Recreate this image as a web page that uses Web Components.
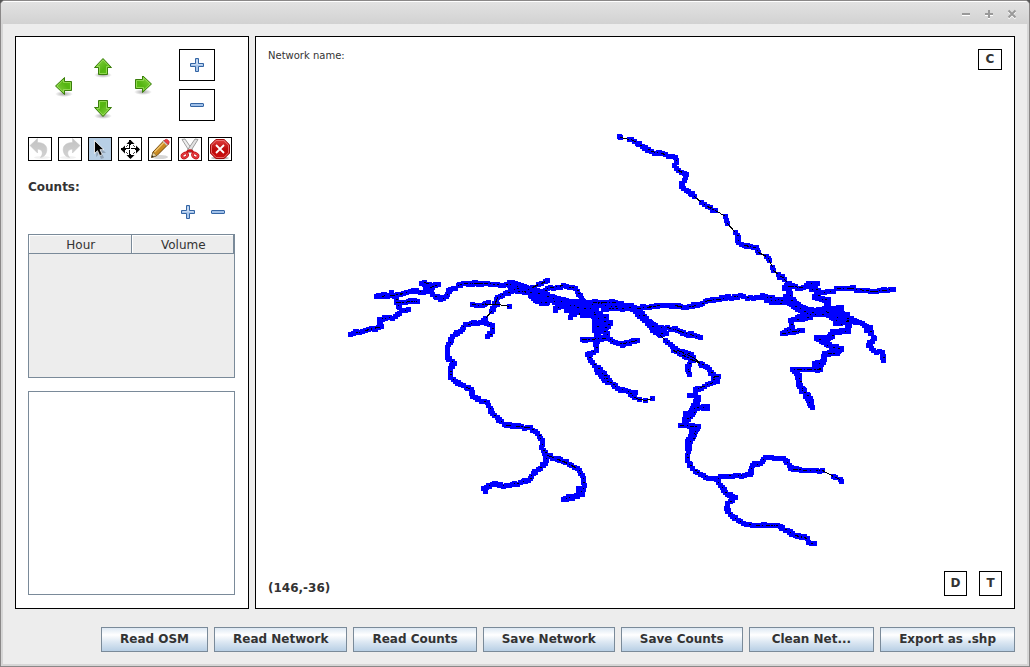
<!DOCTYPE html>
<html lang="en">
<head>
<meta charset="utf-8">
<title>Network editor</title>
<style>
  html, body { margin: 0; }
  body { font: 12px/15px "DejaVu Sans", sans-serif; color: #333; background: #555; }
</style>
</head>
<body>
<app-window>
  <tool-panel slot="main"></tool-panel>
  <network-map slot="main" position="(146,-36)"></network-map>
  <metal-button slot="actions">Read OSM</metal-button>
  <metal-button slot="actions">Read Network</metal-button>
  <metal-button slot="actions">Read Counts</metal-button>
  <metal-button slot="actions">Save Network</metal-button>
  <metal-button slot="actions">Save Counts</metal-button>
  <metal-button slot="actions" wide>Clean Net...</metal-button>
  <metal-button slot="actions">Export as .shp</metal-button>
</app-window>

<script>
const arrow = (turn, x, y) => `
  <defs>
    <linearGradient id="g" x1="0" y1="0" x2="1" y2="1"><stop offset="0" stop-color="#8fd84a"/><stop offset=".6" stop-color="#55b512"/><stop offset="1" stop-color="#5fc615"/></linearGradient>
    <radialGradient id="s"><stop offset="0" stop-color="#000" stop-opacity=".35"/><stop offset="1" stop-color="#000" stop-opacity="0"/></radialGradient>
  </defs>
  <ellipse cx="${12 + x}" cy="${20 + y}" rx="9" ry="3" fill="url(#s)"/>
  <g transform="translate(${x} ${y}) rotate(${turn} 12 12)">
    <path d="M12 3.500L20.500 12.500H16.500V19.500H7.500V12.500H3.500Z" fill="url(#g)" stroke="#3b7d0c" stroke-linejoin="round"/>
    <path d="M12 5L18.100 11.500H15.500V18.500H8.500V11.500H5.900Z" fill="none" stroke="#a5e468" stroke-opacity=".7"/>
  </g>`;
const plus = '<path d="M10.500 5.500h3v5h5v3h-5v5h-3v-5h-5v-3h5z" fill="#a9c6ea" stroke="#3465a4" stroke-linejoin="round"/><path d="M11.500 7v4.500H7M12.500 7v4.500H17" fill="none" stroke="#d4e3f5" stroke-opacity=".7"/>';
const minus = '<rect x="5.500" y="10.500" width="13" height="3" rx=".5" fill="#a0c0e8" stroke="#3465a4"/>';
const undo = `<defs><linearGradient id="u" x1="0" y1="0" x2="0" y2="1"><stop offset="0" stop-color="#c2c2c2"/><stop offset="1" stop-color="#d2d2d2"/></linearGradient></defs>
  <ellipse cx="14" cy="20.500" rx="8" ry="1.500" fill="#f1f1f1"/>
  <path d="M2 8.500L9.500 1.500V5.500C16.500 5.500 20 9.500 18.500 15C17.800 18 15.500 20 12.500 20.500C15 17.500 15.500 12.500 9.500 12V16Z" fill="url(#u)" stroke="#c4c4c4" stroke-width=".5"/>`;

const ICONS = {
  up: arrow(0, 0, -1), down: arrow(180, 0, 0), left: arrow(-90, 1, -2), right: arrow(90, 0, -4),
  plus, minus, undo,
  redo: `<g transform="matrix(-1 0 0 1 24 0)">${undo}</g>`,
  select: '<path d="M9 7l9 9h-4l2 5-3 1-2-5-3 3z" fill="#000" opacity=".2"/><path d="M6.500 3.500V16.500L9.500 13.700L11.700 18.700L14.300 17.500L12 12.700H16Z" fill="#000" stroke="#fff" stroke-width=".8"/>',
  move: `<path d="M12 3v18M3 12h18" stroke="#000" stroke-width="2"/>
    <path d="M12.500 3L8.500 7h8zM12.500 22l-4-4h8zM3 12.500l4-4v8zM22 12.500l-4-4v8z"/>
    <path d="M9.500 8v1.500H8M15.500 8v1.500H17M9.500 17v-1.500H8M15.500 17v-1.500H17" fill="none" stroke="#444" stroke-dasharray="1 1"/>
    <path d="M12.500 8v9M8 12.500h9" stroke="#fff" stroke-width="1"/>`,
  pencil: `<ellipse cx="12" cy="20" rx="8" ry="2" fill="#bbb" opacity=".6"/>
    <path d="M3.500 20.500L5 15L16.500 3L20.500 7L9 18.500Z" fill="#c98a22" stroke="#6b4106"/>
    <path d="M6.500 15L17 4.300" stroke="#efc26c" stroke-width="1.500"/><path d="M3.500 20.500L5 15.500L8.500 18.500Z" fill="#ead9ae" stroke="#6b5a2a" stroke-width=".5"/>
    <path d="M3.500 20.500l.8-2.300 1.500 1.400z" fill="#222"/>
    <path d="M14.800 4.800l4 4 1.700-1.700-4-4z" fill="#ccc"/><path d="M16.500 3.200Q18 1.300 20 3T21 6.700L20 7.500L16 3.700Z" fill="#ef3c44" stroke="#a8202a" stroke-width=".6"/>`,
  scissors: `<path d="M4 2.500L7 2L14.500 13L12.500 16Z" fill="#eee" stroke="#888" stroke-width=".8"/>
    <path d="M20 2.500L17 2L9.500 13L11.500 16Z" fill="#e2e2e2" stroke="#888" stroke-width=".8"/>
    <path d="M8 17Q9.500 13.500 12 13.500T16 17" fill="none" stroke="#c4161a" stroke-width="2.400"/>
    <g fill="#fff" stroke="#c4161a" stroke-width="2.600"><ellipse cx="6.800" cy="18.500" rx="3" ry="2.200" transform="rotate(-30 6.800 18.500)"/><ellipse cx="17.200" cy="18.500" rx="3" ry="2.200" transform="rotate(30 17.200 18.500)"/></g>
    <g fill="none" stroke="#f0454a" stroke-width=".9"><ellipse cx="6.800" cy="18.500" rx="3" ry="2.200" transform="rotate(-30 6.800 18.500)"/><ellipse cx="17.200" cy="18.500" rx="3" ry="2.200" transform="rotate(30 17.200 18.500)"/></g>`,
  stop: `<defs><linearGradient id="r" x1="0" y1="0" x2="0" y2="1"><stop offset="0" stop-color="#e24040"/><stop offset=".5" stop-color="#bb0a0a"/><stop offset="1" stop-color="#cf1010"/></linearGradient></defs>
    <ellipse cx="12" cy="21" rx="9" ry="1.500" fill="#bbb"/>
    <path d="M7.800 2.500H16.200L21.500 7.800V16.200L16.200 21.500H7.800L2.500 16.200V7.800Z" fill="url(#r)" stroke="#a10c0c"/>
    <path d="M8.200 3.500H15.800L20.500 8.200V15.800L15.800 20.500H8.200L3.500 15.800V8.200Z" fill="none" stroke="#ee8080" stroke-width=".8"/>
    <path d="M8 8l8 8M16 8l-8 8" stroke="#fff" stroke-width="1.800"/>`
};

function define(name, html, setup) {
  const template = document.createElement('template');
  template.innerHTML = html;
  customElements.define(name, class extends HTMLElement {
    constructor() {
      super();
      this.attachShadow({ mode: 'open' }).append(template.content.cloneNode(true));
    }
    connectedCallback() { if (setup) setup(this, this.shadowRoot); }
  });
}

/* Window frame: title bar, main area and row of actions */
define('app-window', `
<style>
  :host { display: flex; flex-direction: column; box-sizing: border-box; min-height: 100vh;
    border: 1px solid #8a8888; border-radius: 5px 5px 0 0; background: #d6d6d6; overflow: hidden; }
  header { display: flex; justify-content: flex-end; align-items: center; height: 22px; padding: 0 6px;
    border-top: 1px solid #fff; background: linear-gradient(#e2e2e2, #d2d2d2); }
  header button { width: 23px; height: 22px; padding: 2px 0 0; border: 0; background: none; }
  header svg { display: block; margin: auto; filter: drop-shadow(0 1px 0 #fff); }
  .body { flex: 1; display: flex; flex-direction: column; gap: 18px; margin: 0 2px 2px; padding: 12px; background: #ededed; }
  main { flex: 1; display: flex; gap: 6px; }
  footer { display: flex; flex-wrap: wrap; justify-content: flex-end; gap: 6px; }
</style>
<header>
  <button aria-label="Minimize"><svg width="10" height="10"><path d="M1 5h8" stroke="#999" stroke-width="2"/></svg></button>
  <button aria-label="Maximize"><svg width="10" height="10"><path d="M1 5h8M5 1v8" stroke="#999" stroke-width="2"/></svg></button>
  <button aria-label="Close"><svg width="10" height="10"><path d="M1.500 1.500l7 7M8.500 1.500l-7 7" stroke="#999" stroke-width="2"/></svg></button>
</header>
<div class="body">
  <main><slot name="main"></slot></main>
  <footer><slot name="actions"></slot></footer>
</div>`);

define('metal-button', `
<style>
  :host { display: block; }
  button { height: 25px; padding: 0 18px; border: 1px solid #7a8a99; font: bold 12px/15px "DejaVu Sans", sans-serif; color: #333;
    background: linear-gradient(#dde8f3, #fff 30%, #dde8f3 60%, #b8cfe5); }
  :host([wide]) button { padding: 0 22px; }
</style>
<button><slot></slot></button>`);

/* Small framed button: an icon, or a letter in its slot */
define('tool-button', `
<style>
  :host { display: block; }
  button { display: grid; place-items: center; box-sizing: border-box; width: 100%; height: 100%; padding: 0; border: 1px solid #000;
    background: #fff; font: bold 12px/15px "DejaVu Sans", sans-serif; color: #333; }
  :host([plain]) button { border: 0; background: none; }
  :host([active]) button { background: #b8cfe5; }
  svg { display: block; width: 24px; height: 24px; margin: -1px; }
</style>
<button><slot></slot></button>`, (host, root) => {
  const icon = host.getAttribute('icon');
  if (!icon) return;
  const button = root.querySelector('button');
  button.setAttribute('aria-label', host.getAttribute('label') || icon);
  button.innerHTML = `<svg viewBox="0 0 24 24">${ICONS[icon]}</svg>`;
});

define('tool-panel', `
<style>
  :host { display: flex; flex-direction: column; box-sizing: border-box; flex: 0 0 234px; padding: 12px; border: 1px solid #000; background: #fff; }
  .view { display: flex; justify-content: space-between; padding-right: 21px; }
  .pan { display: grid; grid-template: repeat(3, 20px) / repeat(3, 24px); column-gap: 16px; padding: 8px 0 0 23px; }
  .pan tool-button { display: grid; align-items: center; }
  .pan [icon=up] { grid-area: 1 / 2; }
  .pan [icon=down] { grid-area: 3 / 2; }
  .pan [icon=left] { grid-area: 2 / 1; }
  .pan [icon=right] { grid-area: 2 / 3; }
  .zoom { display: grid; grid-template: 32px 32px / 36px; gap: 8px; }
  .tools { display: flex; gap: 6px; margin-top: 16px; }
  .tools tool-button { width: 24px; height: 24px; }
  h2 { margin: 19px 0 0; font: bold 12px/15px "DejaVu Sans", sans-serif; }
  .edit { display: flex; justify-content: flex-end; gap: 6px; margin: 5px 6px 10px 0; }
  .edit tool-button { width: 24px; height: 24px; }
  .scroll { box-sizing: border-box; margin-right: 1px; border: 1px solid #7a8a99; }
  .counts { height: 144px; background: #ededed; }
  table { width: 100%; border-collapse: separate; border-spacing: 0; table-layout: fixed; background: #fff; }
  th { height: 16px; padding: 2px 0 0 2px; border: solid #7a8a99; border-width: 0 1px 1px 0; box-shadow: inset 1px 1px #fff; background: #ededed; font: 12px/15px "DejaVu Sans", sans-serif; }
  .list { flex: 1; min-height: 60px; margin-top: 13px; margin-bottom: 1px; }
</style>
<div class="view">
  <div class="pan">
    <tool-button plain icon="up" label="Pan up"></tool-button>
    <tool-button plain icon="left" label="Pan left"></tool-button>
    <tool-button plain icon="right" label="Pan right"></tool-button>
    <tool-button plain icon="down" label="Pan down"></tool-button>
  </div>
  <div class="zoom">
    <tool-button icon="plus" label="Zoom in"></tool-button>
    <tool-button icon="minus" label="Zoom out"></tool-button>
  </div>
</div>
<div class="tools">
  <tool-button icon="undo" label="Undo"></tool-button>
  <tool-button icon="redo" label="Redo"></tool-button>
  <tool-button icon="select" label="Select" active></tool-button>
  <tool-button icon="move" label="Move"></tool-button>
  <tool-button icon="pencil" label="Draw"></tool-button>
  <tool-button icon="scissors" label="Cut"></tool-button>
  <tool-button icon="stop" label="Delete"></tool-button>
</div>
<h2>Counts:</h2>
<div class="edit">
  <tool-button plain icon="plus" label="Add count"></tool-button>
  <tool-button plain icon="minus" label="Remove count"></tool-button>
</div>
<div class="scroll counts"><table><thead><tr><th scope="col">Hour</th><th scope="col">Volume</th></tr></thead></table></div>
<div class="scroll list" role="listbox" aria-label="Counts list"></div>`);

/* Links of the network. Before a point: "~" no nodes on the way to it,
   "=" nodes with the link drawn over them.
   "@n" at the start: size of the node marks. */
const ROUTES = [
  '619,136 620,137 ~629,139 631,139 =642,146 651,151 =665,154 675,157 676,162 674,165 678,170 =684,173 686,174 684,180 681,183 683,188 688,191 694,196 ~701,202 707,206 =715,210 ~725,216 727,223 ~735,232 738,237 738,242 744,245 =756,247 758,252 ~766,256 769,260 ~772,267 773,270 ~778,274 784,279 =789,284',
  '350,334 365,330 =381,326 379,319 395,316 401,310 408,309', '401,310 396,302 396,295', '396,302 =417,301', '391,292 396,297',
  '376,296 390,295 =403,293 413,290 423,292 427,288 437,284', '421,283 424,282 =429,284 438,284', '@7 426,290 430,290',
  '421,283 427,285 431,290 432,294 440,299 446,296 450,289 463,283 =487,283 503,285 513,283',
  '517,288 505,293 497,297 ~494,305 491,311 ~485,318 483,320', '496,299 494,303', '483,322 465,324 460,331 452,336 447,347 447,357 454,363 450,368 450,377 460,384 471,389 472,396 487,402 492,413 506,425 =530,427 537,433 542,440 541,447 547,455 545,463 533,473 528,480 506,485 492,484 483,488 485,491',
  '483,322 492,325 492,331 487,336', '472,304 =479,305 488,302', '484,304 ~497,304 ~509,306',
  '547,455 =563,461 =577,468 582,475 584,485 580,494 563,499', '@7 579,489 581,493',
  '@8 511,284 520,287 533,291 543,295 553,299 567,303 583,307', '515,290 528,292 533,298 543,303 551,299 557,302', '@7 538,300 546,301',
  '532,287 ~538,284 541,283 ~545,281 547,280', '535,292 542,291 550,287 =563,285 575,288 580,295 582,300',
  '567,304 555,308 555,310', '571,310 570,317', '@13 570,306 592,307', '@9 588,312 584,313', '@7 585,303 617,304 633,308 643,317 650,324 656,331 660,333',
  '574,314 576,312', '592,302 =615,302', '603,308 625,308', '637,308 =660,305 675,305 =683,307 700,304 707,300 =725,298 740,295 753,298 762,295 775,299 786,300',
  '@7 767,299 782,301', '650,322 658,327 667,327 =680,331 =700,337', '@7 657,331 661,333', '658,333 666,333',
  '660,335 ~665,340 677,350 =693,357 ~700,363', '685,352 691,354 691,360 687,366 689,374',
  '@7 586,312 597,315 595,323 597,335', '597,335 596,350 587,354 590,360 600,370 608,380 617,388 625,390 635,392', '@7 597,368 608,381', '628,391 634,397 ~639,399 ~645,400 ~652,398',
  '@6 600,314 606,317 602,323 610,323 603,328 607,335', '582,339 =607,338 615,342 623,343 =637,340', '622,345 623,344',
  '673,350 =693,360 ~700,363 707,367 713,374 713,382 =695,389 694,395 689,395', '713,376 ~718,376', '713,382 717,381',
  '@7 697,398 696,402 694,406 691,413 685,420', '694,407 706,407', '@7 704,407 706,407', '685,413 692,413', '680,425 =698,426 692,435',
  '@7 695,428 692,435 688,442 688,447', '688,445 687,460 692,468 700,474 716,479 720,476 735,475 750,474 752,465 760,463 765,457 783,458 793,469 =807,470 822,470 ~833,476 835,477 ~840,479 841,481',
  '716,479 720,485 727,494 735,497 727,503 726,508 732,516 743,523 755,525 =777,525 787,530 795,535 =807,538 808,542 814,543',
  '@6 789,284 785,288 789,290 788,297', '@8 787,298 793,303 799,308 807,311 823,313 840,309', '@8 805,313 829,310 840,317 848,320',
  '789,286 =803,287 808,283 817,283', '@6 809,286 818,291 815,297 828,300 827,308', '818,292 833,291 836,288 =850,288 =873,291 =893,289',
  '@8 828,312 837,318 850,320', '838,309 848,320 862,323 868,328 874,338 868,345 873,350 882,352 883,360', '@6 867,330 870,328',
  '810,317 800,318 790,320 792,327 782,333 =802,330', '@6 836,323 843,322 847,315 848,327', '@7 804,317 798,318', '@6 848,324 848,331 833,332 828,338 817,338 829,345 841,349 825,354 823,362 815,364 820,369', '820,369 =792,369 798,375 800,385 808,395 808,400 812,407', '@6 797,373 800,386 808,396 811,405'
];

/* The canvas with the road network and its overlay labels */
define('network-map', `
<style>
  :host { display: grid; grid-template-rows: auto 1fr auto; box-sizing: border-box; flex: 1; min-width: 0; border: 1px solid #000; background: #fff; }
  .canvas { grid-area: 1 / 1 / 4 / 2; contain: size; }
  .canvas svg { display: block; width: 100%; height: 100%; }
  .bar { grid-column: 1; z-index: 1; display: flex; justify-content: space-between; padding: 12px; }
  .top { grid-row: 1; }
  .bottom { grid-row: 3; align-items: flex-end; }
  .name { font-size: 10px; line-height: 14px; }
  .position { font-weight: bold; }
  .top tool-button { width: 24px; height: 21px; }
  .modes { display: flex; gap: 12px; }
  .modes tool-button { width: 23px; height: 25px; }
</style>
<div class="canvas"><svg viewBox="256 37 758 571" role="img" aria-label="Road network" shape-rendering="crispEdges"></svg></div>
<div class="bar top"><span class="name">Network name:</span><tool-button>C</tool-button></div>
<div class="bar bottom"><span class="position"></span>
  <div class="modes"><tool-button>D</tool-button><tool-button>T</tool-button></div></div>`, (host, root) => {
  root.querySelector('.position').textContent = host.getAttribute('position');
  let thinLinks = '', overLinks = '', nodes = '', marks = '', seed = 7;
  const random = n => (seed = (seed * 1103515245 + 12345) % 2147483648) / 2147483648 * n | 0;
  const node = (x, y, s) => { const h = s >> 1; nodes += `M${Math.round(x) - h} ${Math.round(y) - h}h${s}v${s}h-${s}z`; };
  for (const route of ROUTES) {
    let size = 5, last = null;
    for (const token of route.split(' ')) {
      if (token[0] === '@') { size = +token.slice(1); continue; }
      const [x, y] = token.replace(/[~=]/, '').split(',').map(Number);
      if (last) {
        const link = `M${last[0] + .5} ${last[1] + .5}L${x + .5} ${y + .5}`;
        if (token[0] === '~') thinLinks += link;
        if (token[0] === '=') overLinks += link;
        const steps = Math.max(1, Math.round(Math.hypot(x - last[0], y - last[1]) / 3));
        for (let i = 1; token[0] !== '~' && i < steps; i++) {
          const px = last[0] + (x - last[0]) * i / steps, py = last[1] + (y - last[1]) * i / steps;
          node(px, py + (random(4) === 0 ? 1 : 0), size + (random(4) === 0 ? 1 : 0));
          if (random(2)) marks += `M${Math.round(px) + random(size - 4)} ${Math.round(py) + random(size - 4)}h${1 + random(2)}v1h-2z`;
        }
      }
      node(x, y, size);
      last = [x, y];
    }
  }
  root.querySelector('svg').innerHTML =
    `<path d="${nodes}" fill="#00f"/><path d="${marks}"/>` +
    `<path d="${thinLinks}" fill="none" stroke="#000"/>` +
    `<path d="${overLinks}" fill="none" stroke="#000" stroke-dasharray="4 2 1 3"/>`;
});
</script>
</body>
</html>
